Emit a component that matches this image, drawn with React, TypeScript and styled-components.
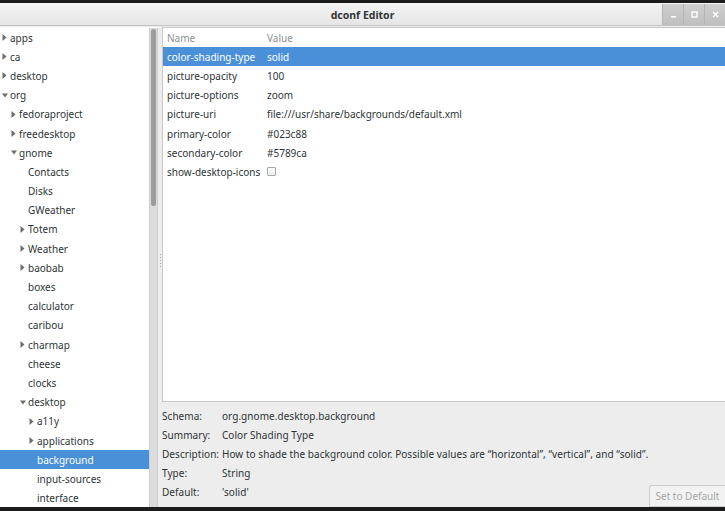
import styled, { createGlobalStyle } from "styled-components";

const GlobalStyle = createGlobalStyle`
  html, body {
    margin: 0;
    padding: 0;
    background: #1c1c1c;
  }
  body {
    font-family: "Noto Sans", "DejaVu Sans", sans-serif;
    font-size: 10px;
    color: #2e3436;
  }
`;

const Window = styled.div`
  width: 725px;
  height: 511px;
  box-sizing: border-box;
  border-top: 3px solid #1c1c1c;
  border-bottom: 4px solid #1c1c1c;
  background: #ededed;
  display: flex;
  flex-direction: column;
  overflow: hidden;
`;

const TitleBar = styled.div`
  height: 23px;
  flex: none;
  box-sizing: border-box;
  border-bottom: 1px solid #c4c4c4;
  background: linear-gradient(#f4f4f4, #e6e6e6);
  display: flex;
  align-items: center;
  justify-content: center;
  padding-top: 2px;
  position: relative;
`;

const Title = styled.span`
  font-weight: bold;
  font-size: 10.5px;
  color: #2e3436;
`;

const Controls = styled.div`
  position: absolute;
  right: 0;
  top: 1px;
  display: flex;
  height: 21px;
`;

const ControlButton = styled.div`
  width: 21px;
  height: 21px;
  display: flex;
  align-items: center;
  justify-content: center;
  background: linear-gradient(#cfcfcf, #bfbfbf);
  border-left: 1px solid #b4b4b4;
  box-sizing: border-box;
  svg {
    display: block;
  }
`;

const Content = styled.div`
  flex: 1;
  display: flex;
  min-height: 0;
  padding-top: 1px;
`;

const LeftPane = styled.div`
  width: 158px;
  flex: none;
  display: flex;
  background: #fff;
  padding-top: 1px;
`;

const Tree = styled.div`
  width: 149px;
  overflow: hidden;
`;

const TreeRow = styled.div<{ $level: number; $selected?: boolean }>`
  height: 19.2px;
  display: flex;
  align-items: center;
  padding-left: ${(p) => p.$level * 9}px;
  background: ${(p) => (p.$selected ? "#4a90d9" : "transparent")};
  color: ${(p) => (p.$selected ? "#fff" : "#2e3436")};
  white-space: nowrap;
`;

const Expander = styled.span`
  width: 10px;
  flex: none;
  display: flex;
  align-items: center;
  padding-left: 2px;
  box-sizing: border-box;
`;

const Scrollbar = styled.div`
  width: 9px;
  flex: none;
  box-sizing: border-box;
  background: #dcdcdc;
  border-left: 1px solid #cfcfcf;
  border-right: 1px solid #cfcfcf;
  padding: 1px 1px 0 1px;
`;

const Thumb = styled.div`
  height: 177px;
  border-radius: 2px;
  background: #9d9d9d;
`;

const Handle = styled.div`
  width: 4px;
  flex: none;
  background: #ededed;
  display: flex;
  flex-direction: column;
  align-items: center;
  justify-content: center;
  gap: 2px;
  padding-bottom: 14px;
`;

const GripDot = styled.span`
  width: 1px;
  height: 1px;
  background: #a8a8a8;
`;

const RightPane = styled.div`
  flex: 1;
  display: flex;
  flex-direction: column;
  min-width: 0;
`;

const ListBox = styled.div`
  height: 375px;
  flex: none;
  box-sizing: border-box;
  background: #fff;
  border: 1px solid #c8c8c8;
  border-right: none;
`;

const Row = styled.div<{ $selected?: boolean; $header?: boolean }>`
  height: 19.2px;
  display: grid;
  grid-template-columns: 100px 1fr;
  align-items: center;
  padding-left: 4px;
  background: ${(p) => (p.$selected ? "#4a90d9" : "transparent")};
  color: ${(p) => (p.$selected ? "#fff" : p.$header ? "#8a8f91" : "#2e3436")};
  white-space: nowrap;
`;

const Checkbox = styled.span`
  display: inline-block;
  width: 7px;
  height: 7px;
  border: 1px solid #a5a9aa;
  border-radius: 1px;
  background: linear-gradient(#fff, #ededed);
  margin-top: -2px;
`;

const Info = styled.div`
  flex: 1;
  display: grid;
  grid-template-columns: 60px 1fr;
  grid-auto-rows: 19.2px;
  align-items: center;
  padding-top: 4px;
  position: relative;
  white-space: nowrap;
  letter-spacing: 0.05px;
`;

const DefaultButton = styled.div`
  position: absolute;
  right: 0;
  bottom: 0;
  width: 76px;
  height: 22px;
  box-sizing: border-box;
  border: 1px solid #cdcdcd;
  border-right: none;
  border-radius: 3px 0 0 0;
  background: #f2f2f2;
  color: #a4a7a7;
  display: flex;
  align-items: center;
  justify-content: center;
  letter-spacing: 0;
`;

type Node = { label: string; level: number; exp?: "open" | "closed"; selected?: boolean };

const nodes: Node[] = [
  { label: "apps", level: 0, exp: "closed" },
  { label: "ca", level: 0, exp: "closed" },
  { label: "desktop", level: 0, exp: "closed" },
  { label: "org", level: 0, exp: "open" },
  { label: "fedoraproject", level: 1, exp: "closed" },
  { label: "freedesktop", level: 1, exp: "closed" },
  { label: "gnome", level: 1, exp: "open" },
  { label: "Contacts", level: 2 },
  { label: "Disks", level: 2 },
  { label: "GWeather", level: 2 },
  { label: "Totem", level: 2, exp: "closed" },
  { label: "Weather", level: 2, exp: "closed" },
  { label: "baobab", level: 2, exp: "closed" },
  { label: "boxes", level: 2 },
  { label: "calculator", level: 2 },
  { label: "caribou", level: 2 },
  { label: "charmap", level: 2, exp: "closed" },
  { label: "cheese", level: 2 },
  { label: "clocks", level: 2 },
  { label: "desktop", level: 2, exp: "open" },
  { label: "a11y", level: 3, exp: "closed" },
  { label: "applications", level: 3, exp: "closed" },
  { label: "background", level: 3, selected: true },
  { label: "input-sources", level: 3 },
  { label: "interface", level: 3 },
];

const keys: { name: string; value: string | null }[] = [
  { name: "color-shading-type", value: "solid" },
  { name: "picture-opacity", value: "100" },
  { name: "picture-options", value: "zoom" },
  { name: "picture-uri", value: "file:///usr/share/backgrounds/default.xml" },
  { name: "primary-color", value: "#023c88" },
  { name: "secondary-color", value: "#5789ca" },
  { name: "show-desktop-icons", value: null },
];

const info: [string, string][] = [
  ["Schema:", "org.gnome.desktop.background"],
  ["Summary:", "Color Shading Type"],
  [
    "Description:",
    "How to shade the background color. Possible values are \u201Chorizontal\u201D, \u201Cvertical\u201D, and \u201Csolid\u201D.",
  ],
  ["Type:", "String"],
  ["Default:", "'solid'"],
];

function Arrow({ open, color }: { open: boolean; color: string }) {
  return open ? (
    <svg width="7" height="5" viewBox="0 0 7 5">
      <path d="M0 0.5 L6 0.5 L3 4.5 Z" fill={color} />
    </svg>
  ) : (
    <svg width="5" height="7" viewBox="0 0 5 7">
      <path d="M0.5 0 L4.5 3.5 L0.5 7 Z" fill={color} />
    </svg>
  );
}

function App() {
  return (
    <Window>
      <GlobalStyle />
      <TitleBar>
        <Title>dconf Editor</Title>
        <Controls>
          <ControlButton>
            <svg width="7" height="7" viewBox="0 0 7 7">
              <rect x="1" y="5" width="5" height="1.5" fill="#fff" />
            </svg>
          </ControlButton>
          <ControlButton>
            <svg width="7" height="7" viewBox="0 0 7 7">
              <rect x="1" y="1" width="5" height="5" fill="none" stroke="#fff" strokeWidth="1.4" />
            </svg>
          </ControlButton>
          <ControlButton>
            <svg width="7" height="7" viewBox="0 0 7 7">
              <path d="M1 1 L6 6 M6 1 L1 6" stroke="#fff" strokeWidth="1.4" />
            </svg>
          </ControlButton>
        </Controls>
      </TitleBar>
      <Content>
        <LeftPane>
          <Tree>
            {nodes.map((n, i) => (
              <TreeRow key={i} $level={n.level} $selected={n.selected}>
                <Expander>
                  {n.exp && <Arrow open={n.exp === "open"} color={n.selected ? "#fff" : "#6a6e6f"} />}
                </Expander>
                {n.label}
              </TreeRow>
            ))}
          </Tree>
          <Scrollbar>
            <Thumb />
          </Scrollbar>
        </LeftPane>
        <Handle>
          {[0, 1, 2, 3, 4].map((i) => (
            <GripDot key={i} />
          ))}
        </Handle>
        <RightPane>
          <ListBox>
            <Row $header>
              <span>Name</span>
              <span>Value</span>
            </Row>
            {keys.map((k, i) => (
              <Row key={k.name} $selected={i === 0}>
                <span>{k.name}</span>
                <span>{k.value === null ? <Checkbox /> : k.value}</span>
              </Row>
            ))}
          </ListBox>
          <Info>
            {info.map(([label, value]) => [
              <span key={label}>{label}</span>,
              <span key={label + "v"}>{value}</span>,
            ])}
            <DefaultButton>Set to Default</DefaultButton>
          </Info>
        </RightPane>
      </Content>
    </Window>
  );
}

export default App;
